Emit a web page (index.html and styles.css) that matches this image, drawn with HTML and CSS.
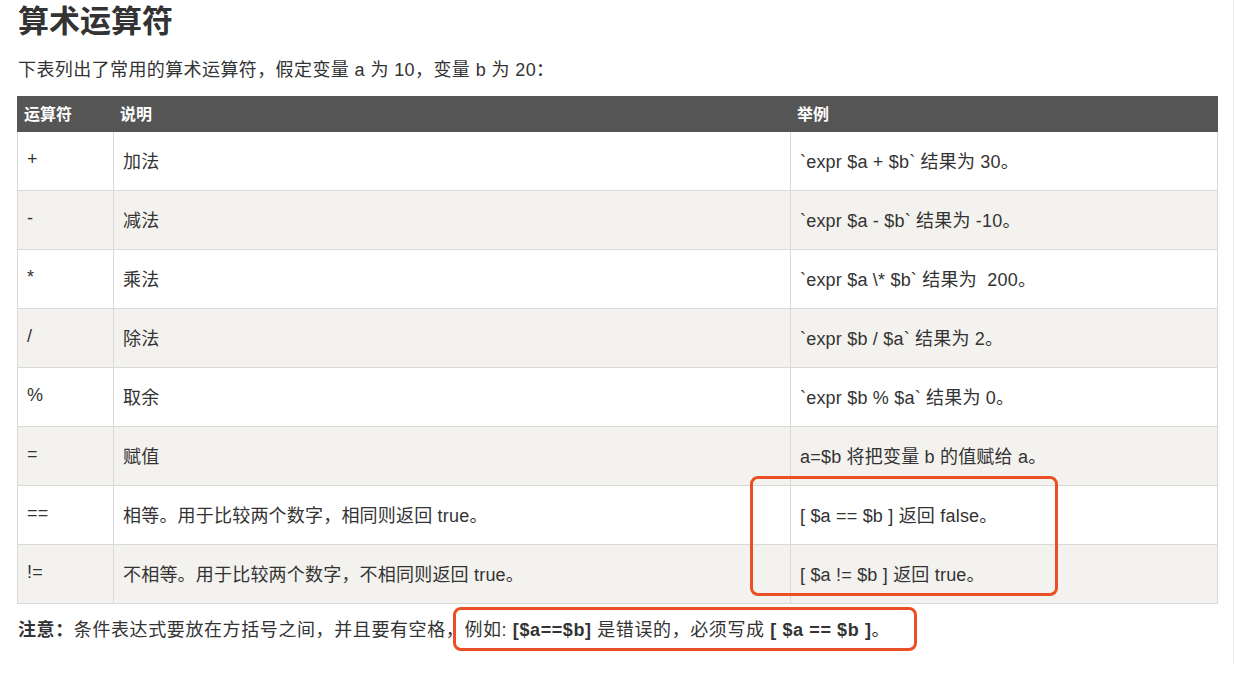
FILE: index.html
```html
<!DOCTYPE html>
<html lang="zh">
<head>
<meta charset="utf-8">
<title>算术运算符</title>
<link rel="stylesheet" href="styles.css">
</head>
<body>
<div class="page">
  <h2 class="title">算术运算符</h2>
  <p class="intro">下表列出了常用的算术运算符，假定变量 a 为 10，变量 b 为 20：</p>
  <table class="ops">
    <colgroup>
      <col class="c1">
      <col class="c2">
      <col class="c3">
    </colgroup>
    <thead>
      <tr><th>运算符</th><th>说明</th><th>举例</th></tr>
    </thead>
    <tbody>
      <tr><td>+</td><td>加法</td><td>`expr $a + $b` 结果为 30。</td></tr>
      <tr><td>-</td><td>减法</td><td>`expr $a - $b` 结果为 -10。</td></tr>
      <tr><td>*</td><td>乘法</td><td>`expr $a \* $b` 结果为&nbsp; 200。</td></tr>
      <tr><td>/</td><td>除法</td><td>`expr $b / $a` 结果为 2。</td></tr>
      <tr><td>%</td><td>取余</td><td>`expr $b % $a` 结果为 0。</td></tr>
      <tr><td>=</td><td>赋值</td><td>a=$b 将把变量 b 的值赋给 a。</td></tr>
      <tr><td>==</td><td>相等。用于比较两个数字，相同则返回 true。</td><td>[ $a == $b ] 返回 false。</td></tr>
      <tr><td>!=</td><td>不相等。用于比较两个数字，不相同则返回 true。</td><td>[ $a != $b ] 返回 true。</td></tr>
    </tbody>
  </table>
  <p class="note"><b>注意：</b>条件表达式要放在方括号之间，并且要有空格，例如: <b>[$a==$b]</b> 是错误的，必须写成 <b>[ $a == $b ]</b>。</p>
  <div class="mark mark-table"></div>
  <div class="mark mark-note"></div>
</div>
</body>
</html>
```

FILE: styles.css
```css
html, body {
  margin: 0;
  padding: 0;
  background: #fff;
}
body {
  font-family: "Liberation Sans", "Noto Sans CJK SC", sans-serif;
  color: #333;
}
.page {
  position: relative;
  width: 1216px;
  height: 663px;
  padding-left: 17px;
  border-right: 1px solid #ececec;
}
.title {
  margin: 0;
  padding: 2px 0 0 1px;
  font-size: 31px;
  line-height: 40px;
  font-weight: bold;
  color: #333;
}
.intro {
  margin: 14px 0 12px;
  font-size: 18px;
  line-height: 28px;
  padding-left: 1px;
  letter-spacing: 0.4px;
}
.ops {
  width: 1200px;
  border-collapse: collapse;
  table-layout: fixed;
  font-size: 18px;
}
.ops .c1 { width: 96px; }
.ops .c2 { width: 677px; }
.ops .c3 { width: 427px; }
.ops th {
  box-sizing: border-box;
  background: #555;
  color: #fff;
  font-weight: bold;
  font-size: 16px;
  text-align: left;
  height: 35px;
  padding: 0 6px 3px;
  border: 1px solid #555;
}
.ops td {
  height: 55px;
  padding: 0 9px 3px;
  border: 1px solid #d9d9d9;
  vertical-align: middle;
  letter-spacing: 0.2px;
}
.ops tbody tr:nth-child(even) td {
  background: #f3f2ee;
}
.note {
  margin: 12px 0 0;
  font-size: 18px;
  line-height: 28px;
  padding-left: 1px;
  letter-spacing: 0.6px;
}
.mark {
  position: absolute;
  border: 3px solid #ea4f25;
  border-radius: 8px;
}
.mark-table {
  left: 750px;
  top: 476px;
  width: 302px;
  height: 114px;
}
.mark-note {
  left: 453px;
  top: 607px;
  width: 458px;
  height: 38px;
}
```
